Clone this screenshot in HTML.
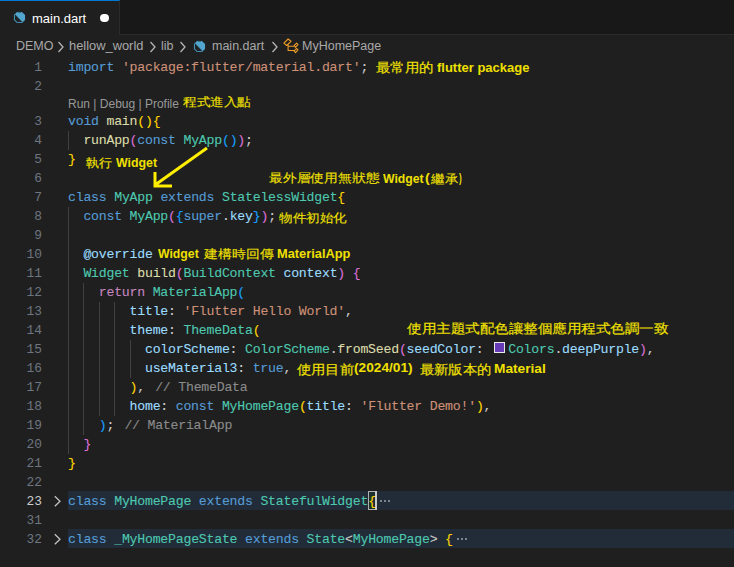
<!DOCTYPE html>
<html><head><meta charset="utf-8">
<style>
*{margin:0;padding:0;box-sizing:border-box}
html,body{width:734px;height:567px;overflow:hidden;background:#1f1f1f}
body{position:relative;font-family:"Liberation Sans",sans-serif}
#tabs{position:absolute;left:0;top:0;width:734px;height:35px;background:#181818;border-bottom:1px solid #2b2b2b}
#tab{position:absolute;left:0;top:0;width:120px;height:35px;background:#1f1f1f;border-top:1px solid #0078d4;border-right:1px solid #2b2b2b}
#tab .name{position:absolute;left:32px;top:9px;font-size:13px;color:#ffffff;line-height:17px}
#tab .dot{position:absolute;left:100.3px;top:12.6px;width:8.7px;height:8.7px;border-radius:50%;background:#fff}
#crumbs{position:absolute;left:0;top:35px;height:22px;width:734px;font-size:12.5px;color:#a9a9a9;line-height:22px;white-space:nowrap}
#crumbs span{position:absolute;top:0}
.ln{position:absolute;left:0;width:42px;text-align:right;font-family:"Liberation Mono",monospace;font-size:12.83px;line-height:19px;color:#6e7681}
.l{position:absolute;left:68px;font-family:"Liberation Mono",monospace;font-size:13.2px;letter-spacing:-0.22px;line-height:19px;white-space:pre;color:#cccccc;-webkit-text-stroke:0.1px currentColor}
.k{color:#569cd6}.s{color:#ce9178}.f{color:#dcdcaa}.t{color:#4ec9b0}.v{color:#9cdcfe}.c{color:#c586c0}.g{color:#8b8b8b;margin-left:2.5px}.an{color:#9cdcfe}
.b1{color:#ffd700}.b2{color:#da70d6}.b3{color:#179fff}
.bm{outline:1px solid #888;outline-offset:-1px}
.sw{display:inline-block;width:17px;height:19px;vertical-align:top;position:relative}.sw::after{content:'';position:absolute;left:2.5px;top:2px;width:9.3px;height:9.3px;border:1px solid #e8e8e8;background:#673ab7}
.ell{display:inline-block;width:14px;height:19px;position:relative;vertical-align:top}.ell i{position:absolute;top:8px;width:2px;height:2px;background:#7a8590}.ell i:nth-child(1){left:4.3px}.ell i:nth-child(2){left:8.3px}.ell i:nth-child(3){left:12.3px}
.ann{position:absolute;font-family:"Liberation Sans",sans-serif;color:#f0e000;line-height:20px;white-space:nowrap}
.cjk{font-size:14px;font-weight:normal;letter-spacing:0.53px}
.guide{position:absolute;width:1px;background:#404040}
.fold{position:absolute;left:68px;width:666px;height:19px;background:#212c38}
</style></head><body>

<div id="tabs"><div id="tab"><svg style="position:absolute;left:12.5px;top:10.3px" width="13" height="13" viewBox="0 0 14 14"><path d="M4.4 1 L9.6 1 L13 4.4 L13 9.6 L9.6 13 L4.4 13 L1 9.6 L1 4.4 Z" fill="#52a5ce"/><path d="M2.4 3.6 L10.4 11.9 L9.3 12.4 L4.6 12.4 L1.6 9.4 L1.6 4.6 Z" fill="#1f2326" stroke="#4595bd" stroke-width="0.9"/><path d="M5.2 1.2 L8.8 1.2" stroke="#23404f" stroke-width="1"/></svg><div class="name">main.dart</div><div class="dot"></div></div></div>
<div id="crumbs"><span style="left:16px">DEMO</span><span style="left:69px;transform:scaleX(1.03);transform-origin:0 0">hellow_world</span><span style="left:161px">lib</span><span style="left:212px">main.dart</span><span style="left:302px">MyHomePage</span></div>
<svg style="position:absolute;left:57px;top:41px" width="8" height="12" viewBox="0 0 8 12"><path d="M1.5 1 L6 6.0 L1.5 11" stroke="#b4b4b4" stroke-width="1.3" fill="none"/></svg>
<svg style="position:absolute;left:149px;top:41px" width="8" height="12" viewBox="0 0 8 12"><path d="M1.5 1 L6 6.0 L1.5 11" stroke="#b4b4b4" stroke-width="1.3" fill="none"/></svg>
<svg style="position:absolute;left:179px;top:41px" width="8" height="12" viewBox="0 0 8 12"><path d="M1.5 1 L6 6.0 L1.5 11" stroke="#b4b4b4" stroke-width="1.3" fill="none"/></svg>
<svg style="position:absolute;left:271px;top:41px" width="8" height="12" viewBox="0 0 8 12"><path d="M1.5 1 L6 6.0 L1.5 11" stroke="#b4b4b4" stroke-width="1.3" fill="none"/></svg>
<svg style="position:absolute;left:193.3px;top:39.5px" width="13" height="13" viewBox="0 0 14 14"><path d="M4.4 1 L9.6 1 L13 4.4 L13 9.6 L9.6 13 L4.4 13 L1 9.6 L1 4.4 Z" fill="#52a5ce"/><path d="M2.4 3.6 L10.4 11.9 L9.3 12.4 L4.6 12.4 L1.6 9.4 L1.6 4.6 Z" fill="#1f2326" stroke="#4595bd" stroke-width="0.9"/><path d="M5.2 1.2 L8.8 1.2" stroke="#23404f" stroke-width="1"/></svg>
<svg style="position:absolute;left:280px;top:36px" width="24" height="20" viewBox="0 0 24 20"><g fill="none" stroke="#ee9d28" stroke-width="1.1" stroke-linejoin="round"><path d="M3.9 7.1 L8.1 3 L11 5.3 L6.7 9.5 Z"/><path d="M14.1 9.5 L16.6 7.2 L18 8.7 L15.5 11.3 Z"/><path d="M14.1 14.8 L16.6 12.4 L18 13.8 L15.5 16.6 Z"/><path d="M8.1 8.8 L8.1 14.5 L14.1 14.5 M8.1 10.2 L14.1 10.2"/></g></svg>
<div class="fold" style="top:491px"></div>
<svg style="position:absolute;left:53px;top:495px" width="10" height="13" viewBox="0 0 10 13"><path d="M1.8 1.3 L7 6.3 L1.8 11.3" stroke="#c5c5c5" stroke-width="1.25" fill="none"/></svg>
<div class="fold" style="top:529px"></div>
<svg style="position:absolute;left:53px;top:533px" width="10" height="13" viewBox="0 0 10 13"><path d="M1.8 1.3 L7 6.3 L1.8 11.3" stroke="#c5c5c5" stroke-width="1.25" fill="none"/></svg>
<div style="position:absolute;left:368px;top:491px;width:9px;height:19px;border:1px solid #b0b0b0;background:#1c2e2e"></div>
<div style="position:absolute;left:375px;top:491px;width:2px;height:19px;background:#c8c8c8"></div>
<div class="guide" style="left:68px;top:131px;height:19px"></div>
<div class="guide" style="left:68px;top:207px;height:247px"></div>
<div class="guide" style="left:83px;top:283px;height:152px"></div>
<div class="guide" style="left:99px;top:302px;height:114px"></div>
<div class="guide" style="left:114px;top:302px;height:114px"></div>
<div class="guide" style="left:130px;top:340px;height:38px"></div>
<div class="ln" style="top:58px">1</div>
<div class="ln" style="top:77px">2</div>
<div class="ln" style="top:112px">3</div>
<div class="ln" style="top:131px">4</div>
<div class="ln" style="top:150px">5</div>
<div class="ln" style="top:169px">6</div>
<div class="ln" style="top:188px">7</div>
<div class="ln" style="top:207px">8</div>
<div class="ln" style="top:226px">9</div>
<div class="ln" style="top:245px">10</div>
<div class="ln" style="top:264px">11</div>
<div class="ln" style="top:283px">12</div>
<div class="ln" style="top:302px">13</div>
<div class="ln" style="top:321px">14</div>
<div class="ln" style="top:340px">15</div>
<div class="ln" style="top:359px">16</div>
<div class="ln" style="top:378px">17</div>
<div class="ln" style="top:397px">18</div>
<div class="ln" style="top:416px">19</div>
<div class="ln" style="top:435px">20</div>
<div class="ln" style="top:454px">21</div>
<div class="ln" style="top:473px">22</div>
<div class="ln" style="top:492px;color:#cccccc">23</div>
<div class="ln" style="top:511px">31</div>
<div class="ln" style="top:530px">32</div>
<div class="l" style="top:58px"><span class="k">import</span> <span class="s">'package:flutter/material.dart'</span>;</div>
<div class="l" style="top:112px"><span class="k">void</span> <span class="f">main</span><span class="b1">(){</span></div>
<div class="l" style="top:131px">  <span class="f">runApp</span><span class="b2">(</span><span class="k">const</span> <span class="t">MyApp</span><span class="b3">()</span><span class="b2">)</span>;</div>
<div class="l" style="top:150px"><span class="b1">}</span></div>
<div class="l" style="top:188px"><span class="k">class</span> <span class="t">MyApp</span> <span class="k">extends</span> <span class="t">StatelessWidget</span><span class="b1">{</span></div>
<div class="l" style="top:207px">  <span class="k">const</span> <span class="t">MyApp</span><span class="b2">(</span><span class="b3">{</span><span class="k">super</span>.<span class="v">key</span><span class="b3">}</span><span class="b2">)</span>;</div>
<div class="l" style="top:245px">  <span class="an">@override</span></div>
<div class="l" style="top:264px">  <span class="t">Widget</span> <span class="f">build</span><span class="b2">(</span><span class="t">BuildContext</span> <span class="v">context</span><span class="b2">)</span> <span class="b2">{</span></div>
<div class="l" style="top:283px">    <span class="c">return</span> <span class="t">MaterialApp</span><span class="b3">(</span></div>
<div class="l" style="top:302px">        <span class="v">title</span>: <span class="s">'Flutter Hello World'</span>,</div>
<div class="l" style="top:321px">        <span class="v">theme</span>: <span class="t">ThemeData</span><span class="b1">(</span></div>
<div class="l" style="top:340px">          <span class="v">colorScheme</span>: <span class="t">ColorScheme</span>.<span class="f">fromSeed</span><span class="b2">(</span><span class="v">seedColor</span>: <span class="sw"></span><span class="t">Colors</span>.<span class="v">deepPurple</span><span class="b2">)</span>,</div>
<div class="l" style="top:359px">          <span class="v">useMaterial3</span>: <span class="k">true</span>,</div>
<div class="l" style="top:378px">        <span class="b1">)</span>, <span class="g">// ThemeData</span></div>
<div class="l" style="top:397px">        <span class="v">home</span>: <span class="k">const</span> <span class="t">MyHomePage</span><span class="b1">(</span><span class="v">title</span>: <span class="s">'Flutter Demo!'</span><span class="b1">)</span>,</div>
<div class="l" style="top:416px">    <span class="b3">)</span>; <span class="g">// MaterialApp</span></div>
<div class="l" style="top:435px">  <span class="b2">}</span></div>
<div class="l" style="top:454px"><span class="b1">}</span></div>
<div class="l" style="top:492px"><span class="k">class</span> <span class="t">MyHomePage</span> <span class="k">extends</span> <span class="t">StatefulWidget</span><span class="b1">{</span><span class="ell"><i></i><i></i><i></i></span></div>
<div class="l" style="top:530px"><span class="k">class</span> <span class="t">_MyHomePageState</span> <span class="k">extends</span> <span class="t">State</span>&lt;<span class="t">MyHomePage</span>&gt; <span class="b1">{</span><span class="ell"><i></i><i></i><i></i></span></div>
<div style="position:absolute;left:68px;top:96px;font-size:12px;line-height:16px;color:#999999;white-space:nowrap">Run | Debug | Profile</div>
<div class="ann" style="left:376.00px;top:58.00px;font-size:14px;font-weight:normal;-webkit-text-stroke:0.2px #f0e000;transform:scale(1.0214,0.920);transform-origin:0 0">最常用的</div>
<div class="ann" style="left:437.40px;top:58.00px;font-size:13px;font-weight:bold;transform:scaleX(0.9989);transform-origin:0 0">flutter package</div>
<div class="ann" style="left:182.70px;top:93.30px;font-size:14px;font-weight:normal;-webkit-text-stroke:0.15px #f0e000;transform:scale(0.9729,0.860);transform-origin:0 0">程式進入點</div>
<div class="ann" style="left:85.90px;top:153.70px;font-size:14px;font-weight:normal;-webkit-text-stroke:0.15px #f0e000;transform:scale(0.9357,0.860);transform-origin:0 0">執行</div>
<div class="ann" style="left:116.20px;top:153.00px;font-size:13px;font-weight:bold;transform:scaleX(0.9500);transform-origin:0 0">Widget</div>
<div class="ann" style="left:268.90px;top:169.20px;font-size:14px;font-weight:normal;-webkit-text-stroke:0.15px #f0e000;transform:scale(0.9857,0.860);transform-origin:0 0">最外層使用無狀態</div>
<div class="ann" style="left:383.40px;top:168.50px;font-size:13px;font-weight:bold;transform:scaleX(0.9409);transform-origin:0 0">Widget</div>
<div class="ann" style="left:424.90px;top:167.70px;font-size:13px;font-weight:bold;transform:scaleX(1.1000);transform-origin:0 0">(</div>
<div class="ann" style="left:430.90px;top:170.00px;font-size:14px;font-weight:normal;-webkit-text-stroke:0.15px #f0e000;transform:scale(0.9643,0.860);transform-origin:0 0">繼承</div>
<div class="ann" style="left:459.00px;top:167.70px;font-size:13px;font-weight:bold;transform:scaleX(0.6250);transform-origin:0 0">)</div>
<div class="ann" style="left:279.20px;top:209.00px;font-size:14px;font-weight:normal;-webkit-text-stroke:0.15px #f0e000;transform:scale(0.9714,0.860);transform-origin:0 0">物件初始化</div>
<div class="ann" style="left:158.20px;top:244.20px;font-size:13px;font-weight:bold;transform:scaleX(0.9432);transform-origin:0 0">Widget</div>
<div class="ann" style="left:203.80px;top:245.00px;font-size:14px;font-weight:normal;-webkit-text-stroke:0.15px #f0e000;transform:scale(0.9914,0.860);transform-origin:0 0">建構時回傳</div>
<div class="ann" style="left:276.71px;top:244.20px;font-size:13px;font-weight:bold;transform:scaleX(0.9863);transform-origin:0 0">MaterialApp</div>
<div class="ann" style="left:407.30px;top:319.20px;font-size:14px;font-weight:normal;-webkit-text-stroke:0.2px #f0e000;transform:scale(1.0361,0.920);transform-origin:0 0">使用主題式配色讓整個應用程式色調一致</div>
<div class="ann" style="left:297.20px;top:360.20px;font-size:14px;font-weight:normal;-webkit-text-stroke:0.2px #f0e000;transform:scale(1.0125,0.920);transform-origin:0 0">使用目前</div>
<div class="ann" style="left:354.15px;top:357.50px;font-size:13px;font-weight:bold;transform:scaleX(1.0537);transform-origin:0 0">(2024/01)</div>
<div class="ann" style="left:420.00px;top:360.20px;font-size:14px;font-weight:normal;-webkit-text-stroke:0.2px #f0e000;transform:scale(1.0143,0.920);transform-origin:0 0">最新版本的</div>
<div class="ann" style="left:494.25px;top:359.00px;font-size:13px;font-weight:bold;transform:scaleX(1.0542);transform-origin:0 0">Material</div>
<svg style="position:absolute;left:0;top:0" width="734" height="567"><path d="M207 148 L155 185 M155 172 L155 186 L172 186" stroke="#ffee00" stroke-width="3" fill="none"/></svg>
</body></html>
